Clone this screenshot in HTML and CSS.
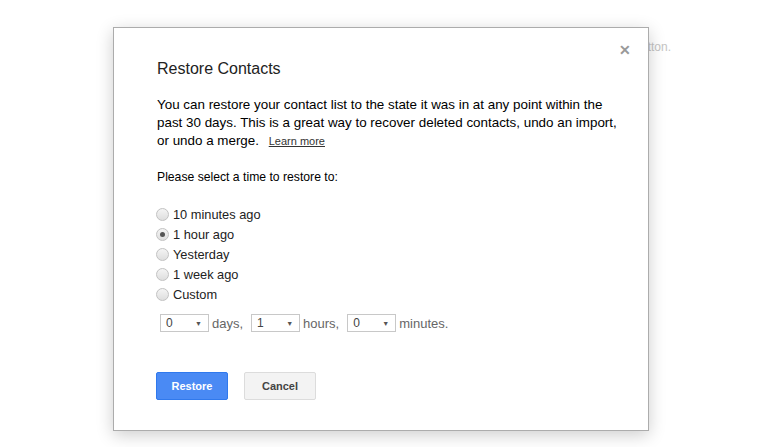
FILE: index.html
```html
<!DOCTYPE html>
<html lang="en">
<head>
  <meta charset="UTF-8" />
  <title>Restore Contacts</title>
  <link rel="stylesheet" href="styles.css">
</head>
<body>
  <div class="page">
    <div class="page-note">button.</div>
  </div>

  <div class="dialog">
    <span class="close">&#x2715;</span>
    <div class="title">Restore Contacts</div>
    <p class="intro">You can restore your contact list to the state it was in at any point within the past 30 days. This is a great way to recover deleted contacts, undo an import, or undo a merge. <a class="learn" href="#">Learn more</a></p>
    <p class="prompt">Please select a time to restore to:</p>

    <div class="options">
      <label class="option"><span class="radio"></span>10 minutes ago</label>
      <label class="option"><span class="radio checked"></span>1 hour ago</label>
      <label class="option"><span class="radio"></span>Yesterday</label>
      <label class="option"><span class="radio"></span>1 week ago</label>
      <label class="option"><span class="radio"></span>Custom</label>
    </div>

    <div class="custom">
      <span class="select"><span>0</span><span class="arrow">&#9660;</span></span>
      <span class="unit">days,</span>
      <span class="select"><span>1</span><span class="arrow">&#9660;</span></span>
      <span class="unit">hours,</span>
      <span class="select"><span>0</span><span class="arrow">&#9660;</span></span>
      <span class="unit">minutes.</span>
    </div>

    <div class="buttons">
      <button class="btn primary">Restore</button>
      <button class="btn">Cancel</button>
    </div>
  </div>
</body>
</html>
```

FILE: styles.css
```css
body {
  margin: 0;
  padding: 0;
  font-family: "Liberation Sans", Arial, sans-serif;
  background: #fff;
  color: #222;
  width: 782px;
  height: 447px;
  overflow: hidden;
  position: relative;
}
.page {
  width: 671px;
  padding-top: 40px;
  text-align: right;
}
.page-note {
  font-size: 12px;
  color: #c4c4c4;
  white-space: nowrap;
}
.dialog {
  position: absolute;
  left: 113px;
  top: 27px;
  width: 491px;
  padding: 31px 0 30px 43px;
  background: #fff;
  border: 1px solid #acacac;
  box-shadow: 0 4px 16px rgba(0, 0, 0, 0.2);
}
.close {
  position: absolute;
  right: 17px;
  top: 14px;
  font-size: 14px;
  font-weight: bold;
  color: #999;
  line-height: 16px;
}
.title {
  font-size: 16px;
  line-height: 20px;
  color: #222;
}
.intro {
  margin: 17px 0 0;
  font-size: 13.4px;
  line-height: 18px;
  color: #000;
  width: 462px;
}
.learn {
  margin-left: 6px;
  font-size: 11px;
  line-height: 14px;
  color: #333;
  text-decoration: underline;
}
.prompt {
  margin: 18px 0 0;
  font-size: 12.2px;
  line-height: 18px;
  color: #000;
}
.options {
  margin-top: 18px;
  display: flex;
  flex-direction: column;
}
.option {
  display: flex;
  align-items: center;
  height: 20px;
  font-size: 12.8px;
  color: #222;
}
.radio {
  width: 11px;
  height: 11px;
  margin: 0 4px 0 -1px;
  border: 1px solid #c2c2c2;
  border-radius: 50%;
  background: linear-gradient(#f4f4f4, #dedede);
  position: relative;
}
.radio.checked::after {
  content: "";
  position: absolute;
  left: 3px;
  top: 3px;
  width: 5px;
  height: 5px;
  border-radius: 50%;
  background: #555;
}
.custom {
  margin-top: 9px;
  display: flex;
  align-items: center;
  height: 20px;
  padding-left: 3px;
  font-size: 13px;
  color: #666;
}
.select {
  display: inline-flex;
  align-items: center;
  justify-content: space-between;
  box-sizing: border-box;
  width: 49px;
  height: 18px;
  padding: 0 6px 0 5px;
  border: 1px solid #c8c8c8;
  color: #444;
  font-size: 12px;
}
.arrow {
  font-size: 7px;
  color: #555;
}
.unit {
  margin: 0 8px 0 3px;
}
.buttons {
  margin-top: 39px;
  margin-left: -1px;
  display: flex;
  gap: 16px;
}
.btn {
  box-sizing: border-box;
  width: 72px;
  height: 28px;
  border: 1px solid #dcdcdc;
  border-radius: 2px;
  background: #f3f3f3;
  color: #444;
  font-family: "Liberation Sans", Arial, sans-serif;
  font-size: 11px;
  font-weight: bold;
  cursor: pointer;
}
.btn.primary {
  background: #4a8af4;
  border-color: #3079ed;
  color: #fff;
}
```
